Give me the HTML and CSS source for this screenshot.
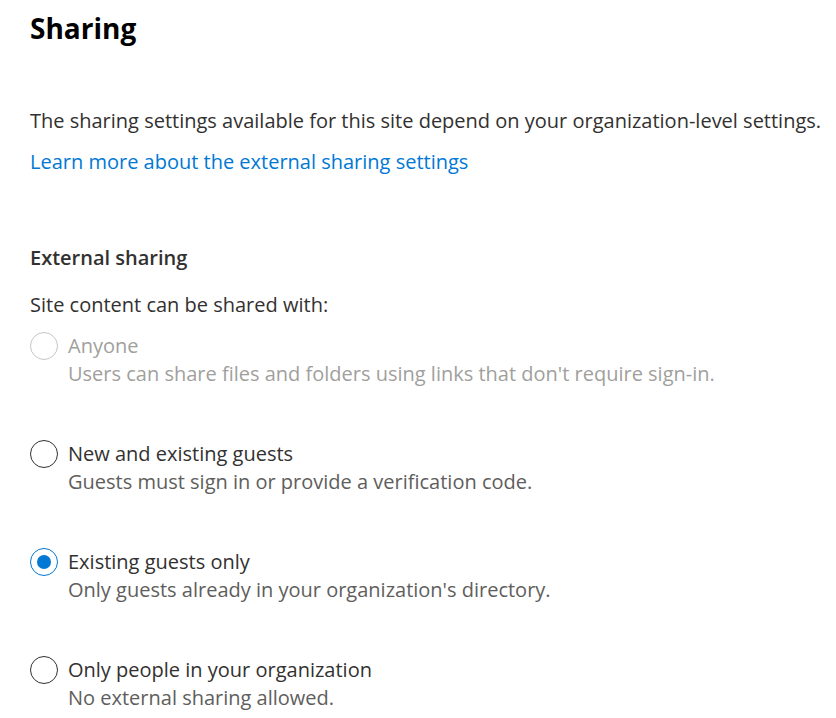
FILE: index.html
```html
<!DOCTYPE html>
<html lang="en">
<head>
<meta charset="utf-8">
<title>Sharing</title>
<link rel="stylesheet" href="styles.css">
</head>
<body>
<main class="page">
  <h1 class="title">Sharing</h1>
  <p class="intro">The sharing settings available for this site depend on your organization-level settings.</p>
  <a class="link" href="#">Learn more about the external sharing settings</a>

  <h2 class="section">External sharing</h2>
  <p class="prompt">Site content can be shared with:</p>

  <div class="options">
    <div class="option disabled">
      <span class="radio"></span>
      <div class="text">
        <div class="label">Anyone</div>
        <div class="desc">Users can share files and folders using links that don't require sign-in.</div>
      </div>
    </div>
    <div class="option">
      <span class="radio"></span>
      <div class="text">
        <div class="label">New and existing guests</div>
        <div class="desc">Guests must sign in or provide a verification code.</div>
      </div>
    </div>
    <div class="option checked">
      <span class="radio"></span>
      <div class="text">
        <div class="label">Existing guests only</div>
        <div class="desc">Only guests already in your organization's directory.</div>
      </div>
    </div>
    <div class="option">
      <span class="radio"></span>
      <div class="text">
        <div class="label">Only people in your organization</div>
        <div class="desc">No external sharing allowed.</div>
      </div>
    </div>
  </div>
</main>
</body>
</html>
```

FILE: styles.css
```css
html, body {
  margin: 0;
  padding: 0;
  background: #ffffff;
}
body {
  font-family: "Open Sans", "Noto Sans", sans-serif;
  color: #323130;
  font-size: 20px;
}
.page {
  padding: 8px 0 0 30px;
  display: flex;
  flex-direction: column;
  align-items: flex-start;
}
.title {
  margin: 0;
  font-size: 28px;
  line-height: 40px;
  font-weight: 700;
  color: #000000;
}
.intro {
  margin: 59px 0 0;
  line-height: 28px;
  white-space: nowrap;
}
.link {
  margin-top: 13px;
  line-height: 28px;
  color: #0078d4;
  text-decoration: none;
}
.section {
  margin: 68px 0 0;
  font-size: 20px;
  font-weight: 600;
  line-height: 28px;
}
.prompt {
  margin: 19px 0 0;
  line-height: 28px;
}
.options {
  margin-top: 13px;
  display: flex;
  flex-direction: column;
  gap: 52px;
}
.option {
  display: flex;
  align-items: flex-start;
  gap: 10px;
}
.radio {
  box-sizing: border-box;
  width: 28px;
  height: 28px;
  border-radius: 50%;
  border: 1px solid #323130;
  display: flex;
  align-items: center;
  justify-content: center;
  flex: none;
}
.label {
  line-height: 28px;
  color: #323130;
}
.desc {
  line-height: 28px;
  color: #605e5c;
}
.disabled .radio {
  border-color: #c8c6c4;
}
.disabled .label,
.disabled .desc {
  color: #a19f9d;
}
.checked .radio {
  border-color: #0078d4;
}
.checked .radio::after {
  content: "";
  width: 14px;
  height: 14px;
  border-radius: 50%;
  background: #0078d4;
}
```
